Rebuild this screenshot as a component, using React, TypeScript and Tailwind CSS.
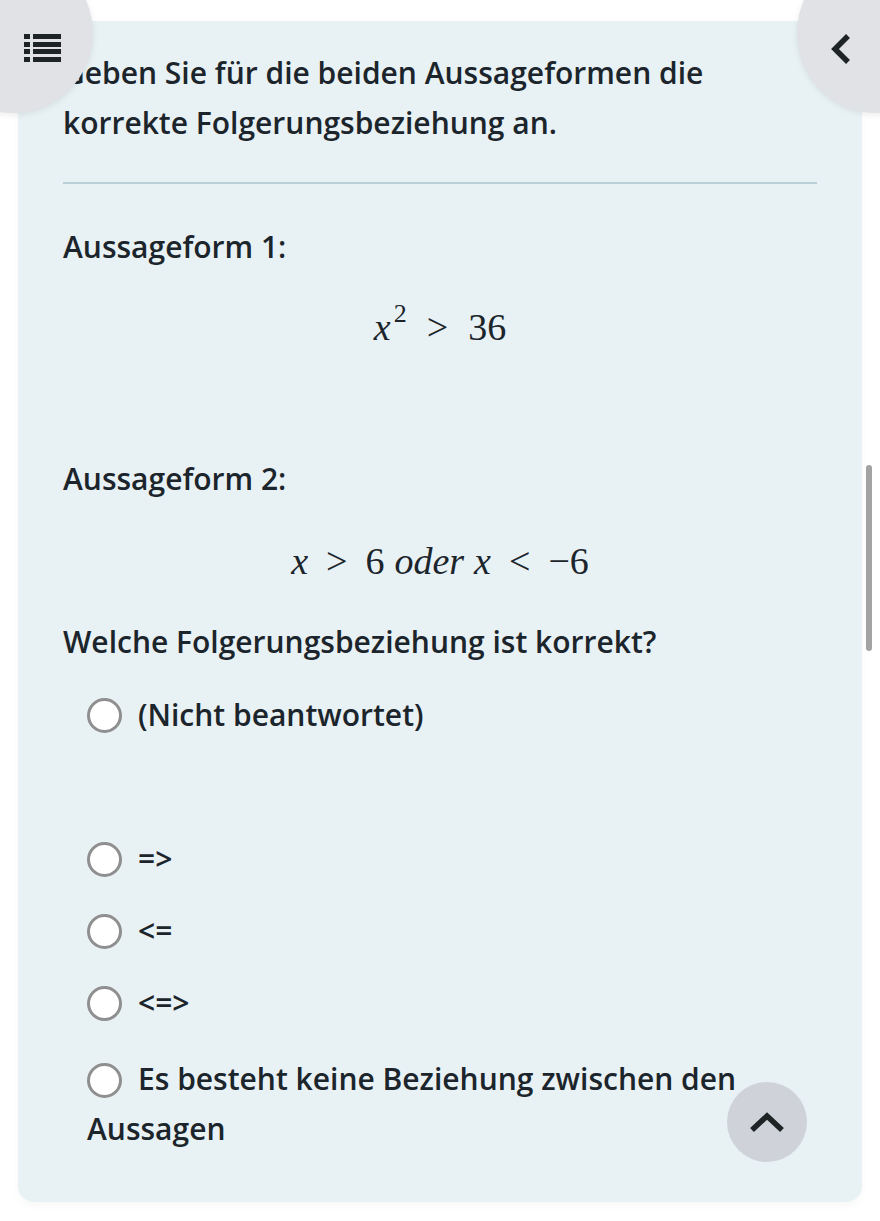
import type { ReactNode } from "react";

const options = ["=>", "<=", "<=>"];

const Radio = ({ inline }: { inline?: boolean }) => (
  <span
    className={`inline-block h-[35px] w-[35px] shrink-0 rounded-full border-[3px] border-[#8f8f8f] bg-white ${
      inline ? "align-[-8px]" : ""
    }`}
  />
);

const MathLine = ({ children, className }: { children: ReactNode; className?: string }) => (
  <div
    className={`flex h-[50px] items-center justify-center text-[38px] font-normal text-[#1b252b] ${className ?? ""}`}
    style={{ fontFamily: '"Liberation Serif", "DejaVu Serif", serif' }}
  >
    {children}
  </div>
);

export default function App() {
  return (
    <div
      className="relative min-h-[1221px] overflow-hidden bg-white px-[18px] pt-[21px] font-semibold text-[#1b252b]"
      style={{ fontFamily: '"Open Sans", "Noto Sans", sans-serif' }}
    >
      <div className="rounded-b-[16px] bg-[#e8f1f4] px-[45px] pb-[48px] pt-[27px] text-[30px] leading-[50px] shadow-[0_4px_10px_rgba(0,0,0,0.03)]">
        <p>Geben Sie für die beiden Aussageformen die korrekte Folgerungsbeziehung an.</p>

        <div className="mt-[34px] h-[2px] bg-[#b8d0d6]" />

        <p className="mt-[38px]">Aussageform 1:</p>
        <MathLine className="mt-[30px]">
          <i>x</i>
          <sup className="ml-[3px] text-[26px] not-italic">2</sup>
          <span className="ml-[20px]">&gt;</span>
          <span className="ml-[20px]">36</span>
        </MathLine>

        <p className="mt-[102px]">Aussageform 2:</p>
        <MathLine className="mt-[32px]">
          <i>x</i>
          <span className="ml-[18px]">&gt;</span>
          <span className="ml-[18px]">6</span>
          <i className="ml-[10px]">oder</i>
          <i className="ml-[10px]">x</i>
          <span className="ml-[18px]">&lt;</span>
          <span className="ml-[18px]">−6</span>
        </MathLine>

        <p className="mt-[31px]">Welche Folgerungsbeziehung ist korrekt?</p>

        <div className="pl-[24px]">
          <label className="mt-[23px] flex items-center gap-[16px]">
            <Radio />
            <span>(Nicht beantwortet)</span>
          </label>

          {options.map((opt, i) => (
            <label
              key={opt}
              className={`flex items-center gap-[16px] ${i === 0 ? "mt-[94px]" : "mt-[22px]"}`}
            >
              <Radio />
              <span>{opt}</span>
            </label>
          ))}

          <p className="mt-[26px]">
            <Radio inline />
            <span className="ml-[16px]">Es besteht keine Beziehung zwischen den Aussagen</span>
          </p>
        </div>
      </div>

      {/* top left menu button */}
      <button
        type="button"
        className="absolute left-[-67px] top-[-47px] h-[160px] w-[160px] rounded-full bg-[#e0e2e5] shadow-[0_2px_6px_rgba(0,0,0,0.08)]"
      >
        <svg width="37" height="30" viewBox="0 0 37 30" className="absolute left-[91px] top-[80px]" fill="#1e2326">
          <rect x="0" y="1" width="6" height="5" />
          <rect x="9" y="1" width="28" height="5" />
          <rect x="0" y="9" width="6" height="5" />
          <rect x="9" y="9" width="28" height="5" />
          <rect x="0" y="16" width="6" height="5" />
          <rect x="9" y="16" width="28" height="5" />
          <rect x="0" y="24" width="6" height="5" />
          <rect x="9" y="24" width="28" height="5" />
        </svg>
      </button>

      {/* top right back button */}
      <button
        type="button"
        className="absolute left-[797px] top-[-47px] h-[160px] w-[160px] rounded-full bg-[#e0e2e5] shadow-[0_2px_6px_rgba(0,0,0,0.08)]"
      >
        <svg width="24" height="34" viewBox="0 0 24 34" className="absolute left-[32px] top-[79px]">
          <path d="M19 4 L6 17 L19 30" fill="none" stroke="#1e2326" strokeWidth="5.5" />
        </svg>
      </button>

      {/* scroll to top */}
      <button
        type="button"
        className="absolute left-[727px] top-[1082px] flex h-[80px] w-[80px] items-center justify-center rounded-full bg-[#cfd3d9]"
      >
        <svg width="38" height="24" viewBox="0 0 38 24">
          <path d="M4 20 L19 6 L34 20" fill="none" stroke="#1e2326" strokeWidth="5.5" />
        </svg>
      </button>

      {/* overlay scrollbar */}
      <div className="absolute left-[866px] top-[465px] h-[186px] w-[6px] rounded-full bg-[#a3a3a3]" />
    </div>
  );
}
